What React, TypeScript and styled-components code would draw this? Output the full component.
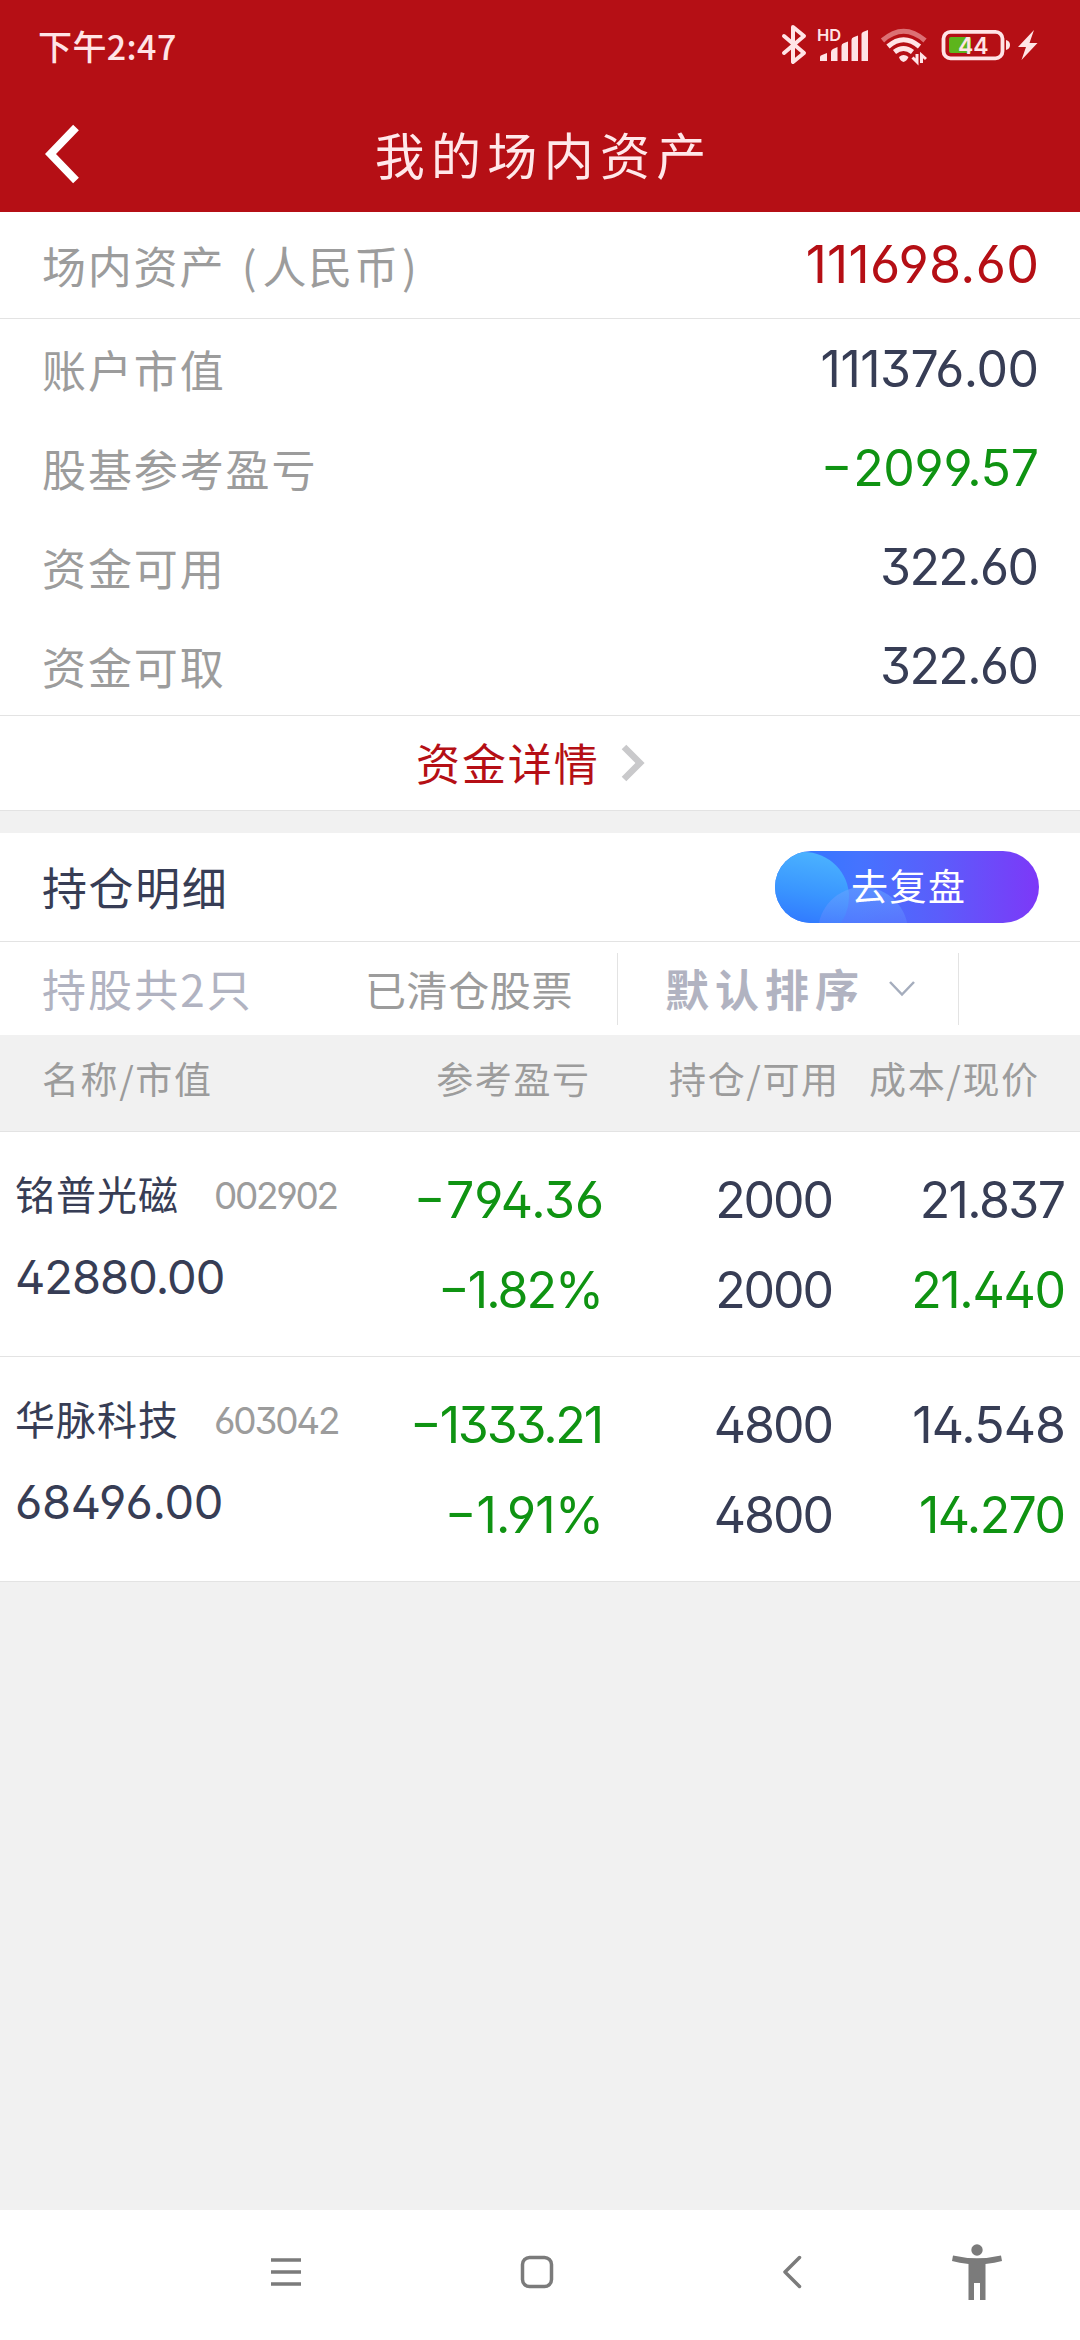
import React from 'react';
import styled, { createGlobalStyle } from 'styled-components';

const RED = '#b50f15';
const DARK = '#373d55';
const GREEN = '#0f9312';
const GRAY = '#9c9c9c';
const MUTED = '#b1b3c1';
const LINE = '#e3e3e3';

const Global = createGlobalStyle`
  * { box-sizing: border-box; }
  body {
    margin: 0;
    background: #f1f1f1;
    font-family: 'Noto Sans CJK SC', sans-serif;
    color: ${DARK};
  }
  svg { display: block; }
`;

const Screen = styled.div`
  width: 1080px;
  height: 2340px;
  display: flex;
  flex-direction: column;
  background: #f1f1f1;
  overflow: hidden;
`;

const Text = styled.span<{ size: number; gap?: number; color?: string; weight?: number; drop?: number }>`
  display: block;
  font-size: ${p => p.size}px;
  line-height: 1;
  letter-spacing: ${p => p.gap ?? 0}px;
  margin-right: ${p => -(p.gap ?? 0)}px;
  color: ${p => p.color ?? DARK};
  font-weight: ${p => p.weight ?? 400};
  padding-top: ${p => Math.max(p.drop ?? 0, 0)}px;
  padding-bottom: ${p => Math.max(-(p.drop ?? 0), 0)}px;
  white-space: nowrap;
`;

const Digits = styled(Text)`
  font-family: Inter, 'Noto Sans CJK SC', sans-serif;
  font-feature-settings: 'case', 'ss01';
`;

const Minus = styled.span`
  display: inline-block;
  margin-right: 5px;
  transform: scaleX(1.38);
`;

const OpenParen = styled.span`
  margin: 0 4px 0 5px;
`;

const CloseParen = styled.span`
  margin-left: 2px;
`;

const Num = ({ value, ...rest }: { value: string; size: number; gap?: number; color?: string }) => (
  <Digits {...rest}>
    {value.startsWith('-') ? <><Minus>-</Minus>{value.slice(1)}</> : value}
  </Digits>
);

const StatusBar = styled.div`
  height: 92px;
  flex: none;
  padding: 0 40px 0 38px;
  display: flex;
  align-items: center;
  justify-content: space-between;
  background: ${RED};
`;

const TitleBar = styled.div`
  height: 120px;
  flex: none;
  padding: 0 44px 0 45px;
  display: grid;
  grid-template-columns: 36px 1fr 36px;
  align-items: center;
  justify-items: center;
  background: ${RED};
  svg { margin-top: 4px; }
`;

const TotalRow = styled.div`
  height: 107px;
  flex: none;
  padding: 0 41px 0 42px;
  display: flex;
  align-items: center;
  justify-content: space-between;
  background: #fff;
  border-bottom: 1px solid ${LINE};
`;

const Summary = styled.div`
  height: 397px;
  flex: none;
  background: #fff;
  border-bottom: 1px solid ${LINE};
`;

const SummaryRow = styled.div`
  height: 99px;
  padding: 0 41px 0 42px;
  display: flex;
  align-items: center;
  justify-content: space-between;
`;

const DetailLink = styled.div`
  height: 95px;
  flex: none;
  padding-left: 416px;
  display: flex;
  align-items: center;
  gap: 23px;
  background: #fff;
  border-bottom: 1px solid ${LINE};
`;

const HoldingsTitle = styled.div`
  height: 109px;
  flex: none;
  margin-top: 22px;
  padding: 0 41px 0 42px;
  display: flex;
  align-items: center;
  justify-content: space-between;
  background: #fff;
  border-bottom: 1px solid ${LINE};
`;

const ReviewButton = styled.button`
  position: relative;
  overflow: hidden;
  width: 264px;
  height: 72px;
  padding: 0 0 3px 2px;
  border: 0;
  border-radius: 36px;
  display: flex;
  align-items: center;
  justify-content: center;
  font-family: inherit;
  background: linear-gradient(90deg, #2b78ff 0%, #4573ff 32%, #5b5dfb 62%, #7d38f8 100%);
  &::before, &::after {
    content: '';
    position: absolute;
    width: 90px;
    height: 90px;
    border-radius: 50%;
  }
  &::before {
    left: -16px;
    top: 1px;
    background: linear-gradient(190deg, #4bb3ff 5%, #3a96ff 45%, #2f74ff 82%);
  }
  &::after {
    left: 43px;
    top: 36px;
    background: linear-gradient(180deg, rgba(105, 165, 255, 0.6), rgba(95, 125, 255, 0.45) 45%);
  }
  span { position: relative; z-index: 1; }
`;

const Filters = styled.div`
  height: 93px;
  flex: none;
  display: grid;
  grid-template-columns: 365px 253px 341px 1fr;
  align-items: center;
  background: #fff;
`;

const FilterCell = styled.div<{ inset?: number; divided?: boolean }>`
  height: 72px;
  padding-left: ${p => p.inset ?? 0}px;
  display: flex;
  align-items: center;
  gap: 29px;
  border-right: ${p => (p.divided ? `1px solid ${LINE}` : '0')};
`;

const TableHead = styled.div`
  height: 97px;
  flex: none;
  padding: 0 42px 0 42px;
  display: grid;
  grid-template-columns: 1fr 250px 249px 200px;
  align-items: center;
  background: #f1f1f1;
  border-bottom: 1px solid ${LINE};
`;

const HeadCell = styled.div<{ end?: boolean }>`
  display: flex;
  justify-content: ${p => (p.end ? 'flex-end' : 'flex-start')};
`;

const Holding = styled.div`
  height: 225px;
  flex: none;
  padding: 0 14px 0 15px;
  display: grid;
  grid-template-columns: 1fr 190px 230px 232px;
  background: #fff;
  border-bottom: 1px solid ${LINE};
`;

const NameCol = styled.div`
  padding-top: 42px;
  display: flex;
  flex-direction: column;
  gap: 37px;
`;

const NameLine = styled.div`
  height: 42px;
  display: flex;
  align-items: center;
  gap: 36px;
`;

const ValueCol = styled.div`
  padding-top: 43px;
  display: flex;
  flex-direction: column;
  align-items: flex-end;
  gap: 40px;
`;

const NavBar = styled.div`
  height: 130px;
  flex: none;
  margin-top: auto;
  padding: 0 77px 0 270px;
  display: grid;
  grid-template-columns: 250px 262px 169px 52px;
  align-items: center;
  background: #fff;
  svg { margin-top: -6px; }
`;

const StatusIcons = () => (
  <svg width="260" height="50" viewBox="780 21 260 50" fill="none">
    <g stroke="#ffe4e6" strokeWidth="4" strokeLinejoin="round" strokeLinecap="round">
      <path d="M784 36 L804 53 L793 62 V27 L804 36 L784 53" />
    </g>
    <text x="817" y="41" fontFamily="Inter, sans-serif" fontSize="16.5" fontWeight="600" fill="#ffe4e6">HD</text>
    <g fill="#ffe4e6">
      <path d="M820 61 V57 Q820 55.500 822 55 L827 53 V61 H821.500 Z" />
      <path d="M831 61 V52 Q831 50 833 49 L837.500 47 V61 Z" />
      <path d="M841.500 61 V46 Q841.500 44 843.500 43.200 L848 41.500 V61 Z" />
      <path d="M851.500 61 V40 Q851.500 38 853.500 37.200 L858 35.500 V61 Z" />
      <path d="M861.500 61 V34 Q861.500 32.500 863.500 31.700 L868 30 V61 Z" />
    </g>
    <g strokeWidth="5">
      <path d="M882.500 40.500 Q903.500 22 925 40.500" stroke="#dc7074" />
      <path d="M888 46.500 Q903.500 33 919.500 46.500" stroke="#ffe4e6" />
      <path d="M894.500 52 Q903.500 45 912.500 52" stroke="#ffe4e6" />
    </g>
    <path d="M899 57 Q903.500 53 908.500 57 Q907 61 903.500 62 Q900 61 899 57 Z" fill="#ffe4e6" />
    <path d="M912.500 57.500 L917 62 V54 M921.500 63 V55 L926 59" stroke="#ffe4e6" strokeWidth="3" />
    <rect x="949" y="37" width="22" height="16" rx="2" fill="#5db51c" />
    <rect x="943.500" y="31.800" width="59" height="26.500" rx="7" stroke="#ffe4e6" strokeWidth="3.800" />
    <text x="958" y="53.500" fontFamily="Inter, sans-serif" fontSize="23" fontWeight="600" fill="#ffe4e6">44</text>
    <path d="M1006 40 Q1010 41 1010 45 Q1010 49 1006 50 Z" fill="#ffe4e6" />
    <path d="M1034 30 L1018 47 H1026 L1021.500 60 L1037.500 43 H1029.500 Z" fill="#ffe4e6" />
  </svg>
);

const BackArrow = () => (
  <svg width="36" height="60" viewBox="0 0 36 60" fill="none">
    <path d="M31 3.500 L5.500 30 L31 56.500" stroke="#fff" strokeWidth="8" />
  </svg>
);

const summary = [
  { label: '账户市值', value: '111376.00', gap: -0.5 },
  { label: '股基参考盈亏', value: '-2099.57', color: GREEN, gap: -0.3 },
  { label: '资金可用', value: '322.60', gap: -1.6 },
  { label: '资金可取', value: '322.60', gap: -1.6 },
];

const holdings = [
  {
    name: '铭普光磁',
    code: ['002902', -2.3],
    value: ['42880.00', -1],
    profit: ['-794.36', -0.2],
    rate: ['-1.82%', -2],
    held: ['2000', -2.1],
    free: ['2000', -2.1],
    cost: ['21.837', -1.6],
    price: ['21.440', -1.3],
  },
  {
    name: '华脉科技',
    code: ['603042', -2.2],
    value: ['68496.00', -0.3],
    profit: ['-1333.21', -2.2],
    rate: ['-1.91%', -0.8],
    held: ['4800', -2],
    free: ['4800', -2],
    cost: ['14.548', -0.9],
    price: ['14.270', -1.6],
  },
] as { name: string; [field: string]: any }[];

const Figure = ({ data, size = 50, color }: { data: [string, number]; size?: number; color?: string }) => (
  <Num value={data[0]} gap={data[1]} size={size} color={color} />
);

export default function App() {
  return (
    <>
      <Global />
      <Screen>
        <StatusBar>
          <Text size={34} gap={0.4} color="#ffe4e6" weight={500}>下午2:47</Text>
          <StatusIcons />
        </StatusBar>
        <TitleBar>
          <BackArrow />
          <Text size={50} gap={6.3} color="#ffe8ea" drop={2}>我的场内资产</Text>
        </TitleBar>

        <TotalRow>
          <Text size={44} gap={1.8} color={GRAY}>
            场内资产 <OpenParen>(</OpenParen>人民币<CloseParen>)</CloseParen>
          </Text>
          <Num size={52} gap={0.3} color={RED} value="111698.60" />
        </TotalRow>
        <Summary>
          {summary.map(row => (
            <SummaryRow key={row.label}>
              <Text size={44} gap={1.9} color={GRAY}>{row.label}</Text>
              <Num size={50} gap={row.gap} color={row.color} value={row.value} />
            </SummaryRow>
          ))}
        </Summary>
        <DetailLink>
          <Text size={44} gap={1.9} color={RED} drop={-3}>资金详情</Text>
          <svg width="24" height="38" viewBox="0 0 24 38" fill="none">
            <path d="M3 3 L19 19 L3 35" stroke="#c9c9cb" strokeWidth="6.500" />
          </svg>
        </DetailLink>

        <HoldingsTitle>
          <Text size={45} gap={1.6} drop={-1}>持仓明细</Text>
          <ReviewButton>
            <Text size={37} gap={1.6} color="#fff">去复盘</Text>
          </ReviewButton>
        </HoldingsTitle>
        <Filters>
          <FilterCell inset={42}>
            <Text size={44} gap={2.1} color={MUTED} drop={-2}>持股共2只</Text>
          </FilterCell>
          <FilterCell divided>
            <Text size={41} gap={0.6} color={GRAY} drop={-1}>已清仓股票</Text>
          </FilterCell>
          <FilterCell inset={47} divided>
            <Text size={44} gap={6} color={MUTED} weight={700} drop={-1}>默认排序</Text>
            <svg width="28" height="18" viewBox="0 0 28 18" fill="none">
              <path d="M2 2 L14 14.500 L26 2" stroke="#a5adbd" strokeWidth="2.500" />
            </svg>
          </FilterCell>
        </Filters>
        <TableHead>
          <HeadCell><Text size={37} gap={1.6} color={GRAY} drop={-10}>名称/市值</Text></HeadCell>
          <HeadCell end><Text size={37} gap={1.6} color={GRAY} drop={-10}>参考盈亏</Text></HeadCell>
          <HeadCell end><Text size={37} gap={1.6} color={GRAY} drop={-10}>持仓/可用</Text></HeadCell>
          <HeadCell end><Text size={37} gap={1.6} color={GRAY} drop={-10}>成本/现价</Text></HeadCell>
        </TableHead>
        {holdings.map(h => (
          <Holding key={h.name}>
            <NameCol>
              <NameLine>
                <Text size={40} gap={1} drop={-5}>{h.name}</Text>
                <Figure data={h.code} size={37} color={GRAY} />
              </NameLine>
              <Figure data={h.value} size={47} />
            </NameCol>
            <ValueCol>
              <Figure data={h.profit} color={GREEN} />
              <Figure data={h.rate} color={GREEN} />
            </ValueCol>
            <ValueCol>
              <Figure data={h.held} />
              <Figure data={h.free} />
            </ValueCol>
            <ValueCol>
              <Figure data={h.cost} />
              <Figure data={h.price} color={GREEN} />
            </ValueCol>
          </Holding>
        ))}

        <NavBar>
          <svg width="32" height="32" viewBox="0 0 32 32">
            <path d="M1 4 H31 M1 16 H31 M1 28 H31" stroke="#7b7b7b" strokeWidth="3.500" />
          </svg>
          <svg width="34" height="34" viewBox="0 0 34 34" fill="none">
            <rect x="2.500" y="2.500" width="29" height="29" rx="7" stroke="#7b7b7b" strokeWidth="3.500" />
          </svg>
          <svg width="20" height="34" viewBox="0 0 20 34" fill="none">
            <path d="M17.500 2.500 L3 17 L17.500 31.500" stroke="#7b7b7b" strokeWidth="3.500" strokeLinecap="round" strokeLinejoin="round" />
          </svg>
          <svg width="52" height="58" viewBox="0 0 52 58" fill="#7b7b7b">
            <circle cx="26" cy="7" r="5.700" />
            <path d="M2 12.500 Q26 18 50 12.500 L51 18 Q44 20 34.500 21 V57 H29 V40 H23 V57 H17.500 V21 Q8 20 1 18 Z" />
          </svg>
        </NavBar>
      </Screen>
    </>
  );
}
